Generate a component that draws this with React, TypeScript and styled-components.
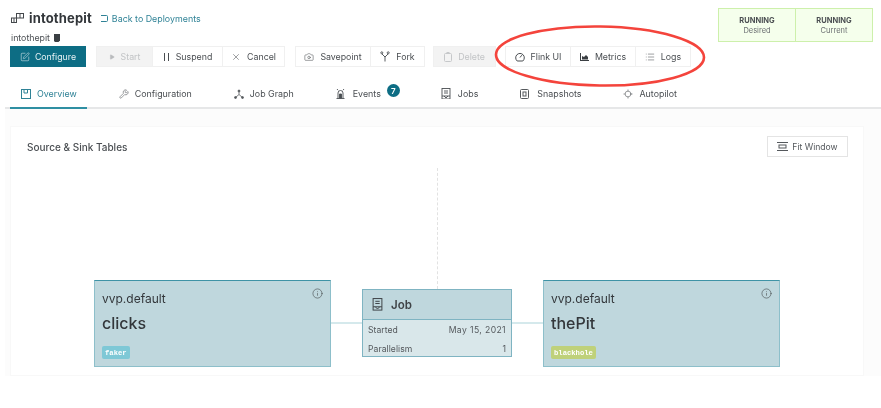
import React from "react";
import styled, { createGlobalStyle } from "styled-components";
import { Camera, Info, List, Locate, Play, SquarePen, Wrench, X } from "lucide-react";

const Global = createGlobalStyle`
  html, body { margin: 0; padding: 0; background: #fff; }
  body { font-family: Inter, "Liberation Sans", sans-serif; color: #3f4347; overflow: hidden; }
`;

const Page = styled.div`
  position: relative;
  width: 881px;
  height: 408px;
  background: #fff;
  overflow: hidden;
  filter: blur(0.35px);
`;

const Header = styled.header`
  height: 76px;
  padding: 8px 8px 0 10px;
  display: flex;
  justify-content: space-between;
  align-items: flex-start;
  box-sizing: border-box;
`;

const HeaderMain = styled.div`
  display: flex;
  flex-direction: column;
`;

const TitleRow = styled.div`
  display: flex;
  align-items: center;
  height: 20px;
  color: #33373b;
`;

const Title = styled.h1`
  margin: 0 8px 0 4px;
  font-size: 13px;
  line-height: 20px;
  font-weight: 700;
  letter-spacing: 0.15px;
`;

const BackLink = styled.a`
  display: flex;
  align-items: center;
  gap: 3px;
  font-size: 8.9px;
  color: #2f8296;
`;

const SubTitle = styled.div`
  display: flex;
  align-items: center;
  gap: 3px;
  margin: 3px 0 0 1px;
  height: 12px;
  font-size: 8.8px;
  color: #4b4f53;
`;

const Actions = styled.div`
  display: flex;
  margin-top: 3px;
`;

const PrimaryButton = styled.button`
  width: 76px;
  height: 21px;
  margin-right: 11px;
  border: 0;
  padding: 0;
  display: flex;
  align-items: center;
  justify-content: center;
  gap: 5px;
  background: #0d6d84;
  color: #e6f1f4;
  font: 400 8.8px Inter, sans-serif;
`;

const Group = styled.div<{ $after?: number }>`
  display: flex;
  margin-right: ${(p) => p.$after ?? 0}px;
`;

const ActionButton = styled.button<{ $w: number; $off?: boolean }>`
  width: ${(p) => p.$w}px;
  height: 21px;
  box-sizing: border-box;
  padding: 0;
  display: flex;
  align-items: center;
  justify-content: center;
  gap: 6px;
  border: 1px solid #f0f0f0;
  margin-left: -1px;
  background: ${(p) => (p.$off ? "#f3f3f3" : "#fff")};
  color: ${(p) => (p.$off ? "#c2c4c6" : "#4a4e52")};
  font: 400 8.8px Inter, sans-serif;
`;

const StatusBox = styled.div`
  display: flex;
  width: 155px;
  height: 34px;
  box-sizing: border-box;
  border: 1px solid #cdf0ab;
  background: #f5ffec;
`;

const StatusCell = styled.div`
  flex: 1;
  display: flex;
  flex-direction: column;
  align-items: center;
  justify-content: center;
  padding-top: 1px;
  font-size: 7.5px;
  line-height: 10px;
  color: #6b6f72;
  & + & { border-left: 1px solid #cdf0ab; }
  strong { font-weight: 700; color: #4b4f52; }
`;

const Tabs = styled.nav`
  height: 33px;
  display: flex;
  gap: 21px;
  box-sizing: border-box;
  border-bottom: 2px solid #e6e7e8;
  margin-left: 5px;
  padding-left: 5px;
`;

const Tab = styled.div<{ $active?: boolean; $gap?: number }>`
  position: relative;
  height: 33px;
  box-sizing: border-box;
  padding: 4px 10px 0 11px;
  display: flex;
  align-items: center;
  gap: ${(p) => p.$gap ?? 6}px;
  font-size: 8.9px;
  color: ${(p) => (p.$active ? "#2f8296" : "#4a4e52")};
  border-bottom: 2px solid ${(p) => (p.$active ? "#2f8fa3" : "transparent")};
`;

const Badge = styled.span`
  width: 13px;
  height: 13px;
  margin: 0 -1px 6px -2px;
  border-radius: 50%;
  background: #0d6d84;
  color: #fff;
  font-size: 8px;
  font-weight: 600;
  display: flex;
  align-items: center;
  justify-content: center;
`;

const Content = styled.main`
  height: 267px;
  padding: 17px 17px 0 5px;
  box-sizing: border-box;
  background: #fcfcfc;
  margin-left: 5px;
`;

const Card = styled.section`
  position: relative;
  height: 250px;
  background: #fff;
  border: 1px solid #f8f8f8;
  box-sizing: border-box;
`;

const CardHead = styled.div`
  display: flex;
  align-items: flex-start;
  justify-content: space-between;
  padding: 9px 15px 0 16px;
`;

const CardTitle = styled.h2`
  margin: 5px 0 0;
  font-size: 10px;
  line-height: 12px;
  font-weight: 500;
  color: #4a4e52;
`;

const FitButton = styled.button`
  width: 81px;
  height: 21px;
  padding: 0;
  box-sizing: border-box;
  display: flex;
  align-items: center;
  justify-content: center;
  gap: 4px;
  background: #fff;
  border: 1px solid #e4e4e4;
  color: #54585c;
  font: 400 8.6px Inter, sans-serif;
`;

const TableNode = styled.div<{ $x: number }>`
  position: absolute;
  left: ${(p) => p.$x}px;
  top: 153px;
  width: 237px;
  height: 87px;
  box-sizing: border-box;
  padding: 10px 7px 0 7px;
  background: #bfd7dd;
  border: 1px solid #8dbfca;
  border-top-color: #3f93a6;
  color: #33373b;
`;

const NodeNs = styled.div`
  font-size: 12px;
  line-height: 15px;
`;

const NodeName = styled.div`
  margin-top: 7px;
  font-size: 16px;
  line-height: 20px;
  font-weight: 500;
`;

const Tag = styled.span<{ $bg: string }>`
  position: absolute;
  left: 7px;
  bottom: 7px;
  height: 13px;
  padding: 0 3px;
  display: flex;
  align-items: center;
  border-radius: 2px;
  background: ${(p) => p.$bg};
  color: #fff;
  font: 700 7.2px "Liberation Mono", monospace;
`;

const InfoMark = styled.span`
  position: absolute;
  right: 7px;
  top: 7px;
  display: flex;
  color: #44484b;
`;

const JobNode = styled.div`
  position: absolute;
  left: 351px;
  top: 162px;
  width: 150px;
  height: 68px;
  box-sizing: border-box;
  background: #d9e7ea;
  border: 1px solid #7fb4c2;
  color: #54585c;
`;

const JobHead = styled.div`
  height: 30px;
  box-sizing: border-box;
  padding-left: 9px;
  display: flex;
  align-items: center;
  gap: 8px;
  background: #bfd7dd;
  border-bottom: 1px solid #7fb4c2;
  color: #3f4347;
  font-size: 11.5px;
  font-weight: 600;
`;

const JobRow = styled.div`
  height: 19px;
  padding: 0 5px;
  display: flex;
  align-items: center;
  justify-content: space-between;
  font-size: 8.6px;
  letter-spacing: 0.05px;
`;

const RowValue = styled.span`
  letter-spacing: 0.4px;
`;

const Connector = styled.div<{ $x: number }>`
  position: absolute;
  left: ${(p) => p.$x}px;
  top: 195px;
  width: 31px;
  height: 2px;
  background: #d5e9ec;
`;

const Spine = styled.div`
  position: absolute;
  left: 426px;
  top: 41px;
  height: 121px;
  border-left: 1px dashed #e2e2e2;
`;

const Annotation = styled.svg`
  position: absolute;
  left: 490px;
  top: 20px;
`;

const TitleGlyph = () => (
  <svg width="15" height="12" viewBox="0 0 15 12" fill="none" stroke="#44484c" strokeWidth="1">
    <rect x="6.500" y="1.500" width="7" height="4.500" /><path d="M10 1.500v4.500" /><rect x="1.500" y="6" width="5" height="4.500" /><path d="M4 6v4.500" />
  </svg>
);
const BackGlyph = () => (
  <svg width="9" height="9" viewBox="0 0 9 9" fill="none" stroke="#2f8296" strokeWidth="1">
    <path d="M1 1.500h5.500a1 1 0 0 1 1 1v4a1 1 0 0 1-1 1H1" />
  </svg>
);
const PodGlyph = () => (
  <svg width="8" height="9" viewBox="0 0 8 9"><path d="M1 1h6v6.500L5.500 9H2L1 8z" fill="#3b3f43" /></svg>
);
const PauseGlyph = () => (
  <svg width="7" height="8" viewBox="0 0 7 8" fill="none" stroke="#4a4e52"><path d="M1.500 0v8M5.500 0v8" /></svg>
);
const ForkGlyph = () => (
  <svg width="10" height="11" viewBox="0 0 10 11" fill="none" stroke="#565a5e">
    <circle cx="1.800" cy="1.800" r="1" /><circle cx="8.200" cy="1.800" r="1" /><path d="M2 3l3 3 3-3M5 6v4.500" />
  </svg>
);
const DeleteGlyph = () => (
  <svg width="8" height="10" viewBox="0 0 8 10" fill="none" stroke="#c6c8ca">
    <rect x=".5" y="1.500" width="7" height="8" rx="1" /><path d="M2.500 .5h3" />
  </svg>
);
const GaugeGlyph = () => (
  <svg width="10" height="10" viewBox="0 0 10 10" fill="none" stroke="#4a4e52">
    <path d="M2.200 9a4.300 4.300 0 1 1 5.600 0z" /><path d="M5 5.500L6.800 3.200" />
  </svg>
);
const MetricsGlyph = () => (
  <svg width="9" height="8" viewBox="0 0 9 8"><path d="M0 0h1v7h8v1H0zM2 6.500V3l2 1 2-2 2 2v2.500z" fill="#3b3f43" /></svg>
);
const OverviewGlyph = () => (
  <svg width="10" height="10" viewBox="0 0 10 10" fill="none" stroke="#2f8296">
    <rect x=".5" y=".5" width="9" height="9" /><path d="M3 .5v3.500h3.500V.5" />
  </svg>
);
const GraphGlyph = () => (
  <svg width="10" height="10" viewBox="0 0 10 10" fill="none" stroke="#55595d" strokeWidth=".8">
    <circle cx="5" cy="2" r="1" fill="#55595d" /><circle cx="1.500" cy="8.500" r="1" fill="#55595d" /><circle cx="8.500" cy="8.500" r="1" fill="#55595d" /><path d="M5 3v2.500L1.500 8.500M5 5.500l3.500 3" />
  </svg>
);
const EventGlyph = () => (
  <svg width="9" height="11" viewBox="0 0 9 11" fill="none" stroke="#4a4e52" strokeWidth=".9">
    <path d="M2 10V5a2.500 2.500 0 0 1 5 0v5M.5 10.500h8M1 1l1 1.200M8 1L7 2.200" /><path d="M3.500 6h2v4h-2z" fill="#4a4e52" />
  </svg>
);
const JobGlyph = ({ w = 10, color = "#4a4e52" }: { w?: number; color?: string }) => (
  <svg width={w} height={w * 1.15} viewBox="0 0 10 11.500" fill="none" stroke={color} strokeWidth=".9">
    <rect x="1" y=".5" width="8" height="10.500" /><path d="M3 3h4M3 5h4M1 8h8M3 8l2 2 2-2" />
  </svg>
);
const SnapGlyph = () => (
  <svg width="9" height="10" viewBox="0 0 9 10" fill="none" stroke="#55595d">
    <rect x=".5" y=".5" width="8" height="9" rx="1" /><rect x="3" y="3" width="3" height="4" />
  </svg>
);
const FitGlyph = () => (
  <svg width="11" height="9" viewBox="0 0 11 9" fill="none" stroke="#54585c">
    <path d="M0 .5h11M0 8.500h11" /><rect x="2" y="3" width="7" height="3" />
  </svg>
);

const Icon = { size: 10, strokeWidth: 1.300 };

export default function App() {
  return (
    <Page>
      <Global />
      <Header>
        <HeaderMain>
          <TitleRow>
            <TitleGlyph />
            <Title>intothepit</Title>
            <BackLink><BackGlyph />Back to Deployments</BackLink>
          </TitleRow>
          <SubTitle>intothepit <PodGlyph /></SubTitle>
          <Actions>
            <PrimaryButton><SquarePen {...Icon} />Configure</PrimaryButton>
            <Group $after={11}>
              <ActionButton $w={57} $off><Play size={6} fill="#b9bbbd" strokeWidth={1} />Start</ActionButton>
              <ActionButton $w={71}><PauseGlyph />Suspend</ActionButton>
              <ActionButton $w={63}><X {...Icon} />Cancel</ActionButton>
            </Group>
            <Group $after={9}>
              <ActionButton $w={76}><Camera {...Icon} />Savepoint</ActionButton>
              <ActionButton $w={55}><ForkGlyph />Fork</ActionButton>
            </Group>
            <Group $after={10}>
              <ActionButton $w={63} $off><DeleteGlyph />Delete</ActionButton>
            </Group>
            <Group>
              <ActionButton $w={66}><GaugeGlyph />Flink UI</ActionButton>
              <ActionButton $w={66}><MetricsGlyph />Metrics</ActionButton>
              <ActionButton $w={56}><List {...Icon} />Logs</ActionButton>
            </Group>
          </Actions>
        </HeaderMain>
        <StatusBox>
          <StatusCell><strong>RUNNING</strong>Desired</StatusCell>
          <StatusCell><strong>RUNNING</strong>Current</StatusCell>
        </StatusBox>
      </Header>
      <Tabs>
        <Tab $active><OverviewGlyph />Overview</Tab>
        <Tab><Wrench {...Icon} />Configuration</Tab>
        <Tab><GraphGlyph />Job Graph</Tab>
        <Tab $gap={8}><EventGlyph />Events<Badge>7</Badge></Tab>
        <Tab $gap={7}><JobGlyph />Jobs</Tab>
        <Tab $gap={8}><SnapGlyph />Snapshots</Tab>
        <Tab><Locate {...Icon} />Autopilot</Tab>
      </Tabs>
      <Content>
        <Card>
          <CardHead>
            <CardTitle>Source &amp; Sink Tables</CardTitle>
            <FitButton><FitGlyph />Fit Window</FitButton>
          </CardHead>
          <Spine />
          <Connector $x={320} />
          <Connector $x={501} />
          <TableNode $x={83}>
            <NodeNs>vvp.default</NodeNs>
            <NodeName>clicks</NodeName>
            <Tag $bg="#7ec8d6">faker</Tag>
            <InfoMark><Info size={11} strokeWidth={1.300} /></InfoMark>
          </TableNode>
          <JobNode>
            <JobHead><JobGlyph w={11} color="#3f4347" />Job</JobHead>
            <JobRow><span>Started</span><RowValue>May 15, 2021</RowValue></JobRow>
            <JobRow><span>Parallelism</span><span>1</span></JobRow>
          </JobNode>
          <TableNode $x={532}>
            <NodeNs>vvp.default</NodeNs>
            <NodeName>thePit</NodeName>
            <Tag $bg="#bfd17a">blackhole</Tag>
            <InfoMark><Info size={11} strokeWidth={1.300} /></InfoMark>
          </TableNode>
        </Card>
      </Content>
      <Annotation width="222" height="72" viewBox="0 0 222 72" fill="none">
        <ellipse cx="110" cy="36" rx="104" ry="29.500" stroke="#f4443c" strokeWidth="2.600" transform="rotate(0.8 110 36)" />
      </Annotation>
    </Page>
  );
}
